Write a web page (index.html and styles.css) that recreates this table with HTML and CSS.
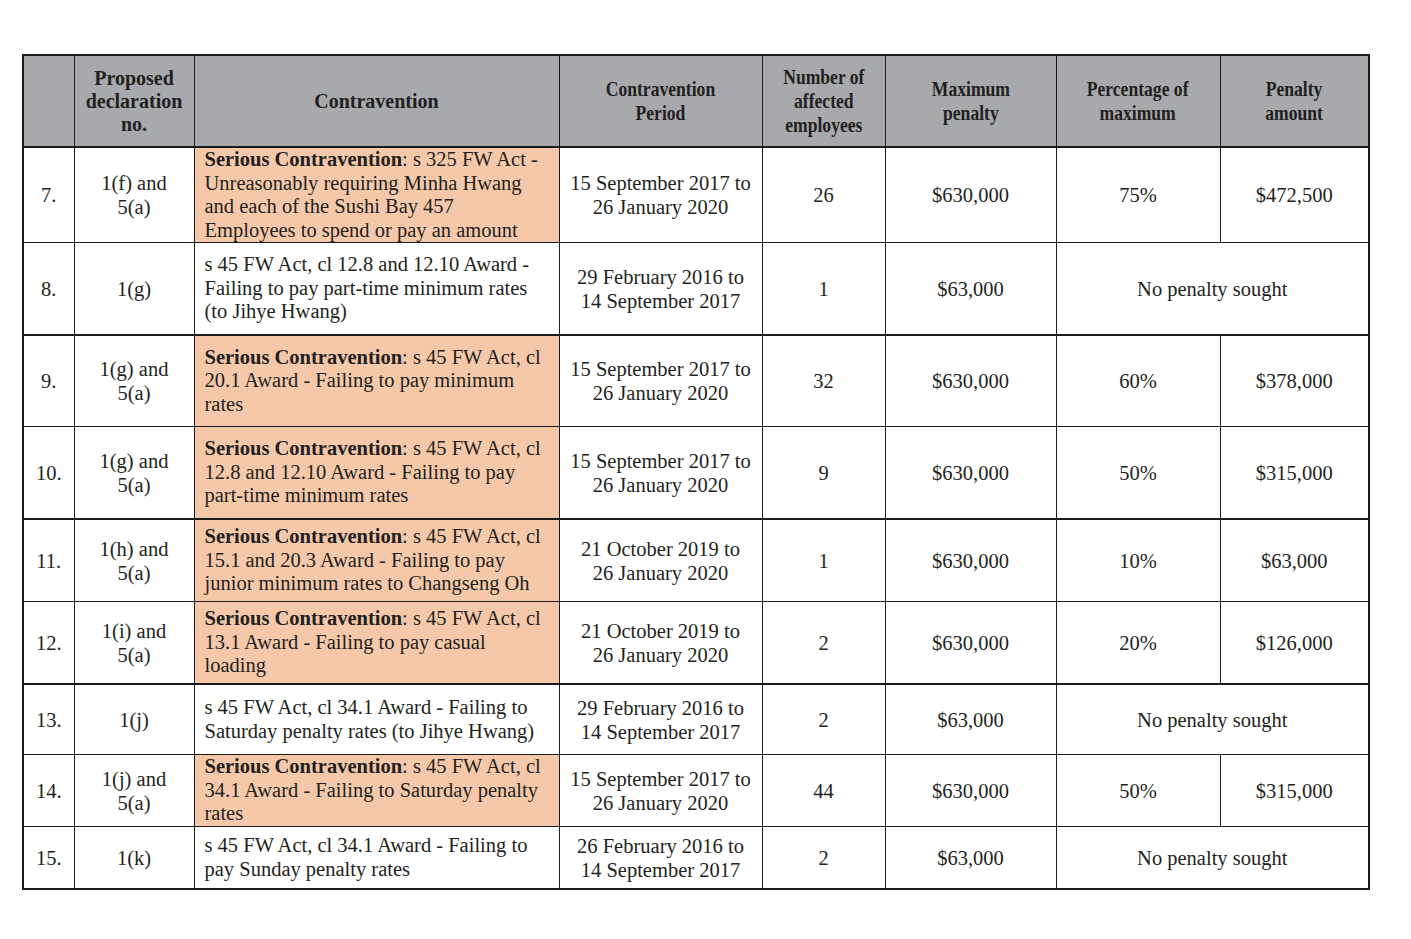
FILE: index.html
```html
<!DOCTYPE html>
<html>
<head>
<meta charset="utf-8">
<link rel="stylesheet" href="styles.css">
</head>
<body>
<table class="tbl">
  <colgroup>
    <col class="c1"><col class="c2"><col class="c3"><col class="c4"><col class="c5"><col class="c6"><col class="c7"><col class="c8">
  </colgroup>
  <thead>
    <tr class="hdr">
      <th></th>
      <th>Proposed<br>declaration<br>no.</th>
      <th>Contravention</th>
      <th><span class="cond">Contravention<br>Period</span></th>
      <th><span class="cond">Number of<br>affected<br>employees</span></th>
      <th><span class="cond">Maximum<br>penalty</span></th>
      <th><span class="cond">Percentage of<br>maximum</span></th>
      <th><span class="cond">Penalty<br>amount</span></th>
    </tr>
  </thead>
  <tbody>
    <tr class="r7">
      <td>7.</td><td>1(f) and<br>5(a)</td>
      <td class="desc hl"><b>Serious Contravention</b>: s 325 FW Act - Unreasonably requiring Minha Hwang and each of the Sushi Bay 457 Employees to spend or pay an amount</td>
      <td>15 September 2017 to<br>26 January 2020</td><td>26</td><td>$630,000</td><td>75%</td><td>$472,500</td>
    </tr>
    <tr class="r8">
      <td>8.</td><td>1(g)</td>
      <td class="desc">s 45 FW Act, cl 12.8 and 12.10 Award - Failing to pay part-time minimum rates (to Jihye Hwang)</td>
      <td>29 February 2016 to<br>14 September 2017</td><td>1</td><td>$63,000</td><td colspan="2">No penalty sought</td>
    </tr>
    <tr class="r9 thick">
      <td>9.</td><td>1(g) and<br>5(a)</td>
      <td class="desc hl"><b>Serious Contravention</b>: s 45 FW Act, cl 20.1 Award - Failing to pay minimum rates</td>
      <td>15 September 2017 to<br>26 January 2020</td><td>32</td><td>$630,000</td><td>60%</td><td>$378,000</td>
    </tr>
    <tr class="r10">
      <td>10.</td><td>1(g) and<br>5(a)</td>
      <td class="desc hl"><b>Serious Contravention</b>: s 45 FW Act, cl 12.8 and 12.10 Award - Failing to pay part-time minimum rates</td>
      <td>15 September 2017 to<br>26 January 2020</td><td>9</td><td>$630,000</td><td>50%</td><td>$315,000</td>
    </tr>
    <tr class="r11 thick">
      <td>11.</td><td>1(h) and<br>5(a)</td>
      <td class="desc hl"><b>Serious Contravention</b>: s 45 FW Act, cl 15.1 and 20.3 Award - Failing to pay junior minimum rates to Changseng Oh</td>
      <td>21 October 2019 to<br>26 January 2020</td><td>1</td><td>$630,000</td><td>10%</td><td>$63,000</td>
    </tr>
    <tr class="r12">
      <td>12.</td><td>1(i) and<br>5(a)</td>
      <td class="desc hl"><b>Serious Contravention</b>: s 45 FW Act, cl 13.1 Award - Failing to pay casual loading</td>
      <td>21 October 2019 to<br>26 January 2020</td><td>2</td><td>$630,000</td><td>20%</td><td>$126,000</td>
    </tr>
    <tr class="r13 thick">
      <td>13.</td><td>1(j)</td>
      <td class="desc">s 45 FW Act, cl 34.1 Award - Failing to Saturday penalty rates (to Jihye Hwang)</td>
      <td>29 February 2016 to<br>14 September 2017</td><td>2</td><td>$63,000</td><td colspan="2">No penalty sought</td>
    </tr>
    <tr class="r14">
      <td>14.</td><td>1(j) and<br>5(a)</td>
      <td class="desc hl"><b>Serious Contravention</b>: s 45 FW Act, cl 34.1 Award - Failing to Saturday penalty rates</td>
      <td>15 September 2017 to<br>26 January 2020</td><td>44</td><td>$630,000</td><td>50%</td><td>$315,000</td>
    </tr>
    <tr class="r15">
      <td>15.</td><td>1(k)</td>
      <td class="desc">s 45 FW Act, cl 34.1 Award - Failing to pay Sunday penalty rates</td>
      <td>26 February 2016 to<br>14 September 2017</td><td>2</td><td>$63,000</td><td colspan="2">No penalty sought</td>
    </tr>
  </tbody>
</table>
</body>
</html>
```

FILE: styles.css
```css
html, body {
  margin: 0;
  padding: 0;
  background: #ffffff;
}
body {
  padding: 54px 0 0 22px;
  font-family: "Liberation Serif", "Times New Roman", serif;
  color: #231f20;
}
.tbl {
  border-collapse: collapse;
  table-layout: fixed;
  width: 1346px;
  font-size: 20.5px;
  line-height: 24px;
  border: 2px solid #1a1a1a;
}
.c1 { width: 51px; }
.c2 { width: 120px; }
.c3 { width: 365px; }
.c4 { width: 203px; }
.c5 { width: 123px; }
.c6 { width: 171px; }
.c7 { width: 164px; }
.c8 { width: 149px; }
.tbl th, .tbl td {
  border: 1px solid #1a1a1a;
  text-align: center;
  vertical-align: middle;
  padding: 0 4px;
}
.hdr th {
  background: #a7a9ac;
  height: 90px;
  font-weight: bold;
  font-size: 20px;
  line-height: 23px;
  color: #231f20;
  border-bottom: 2px solid #1a1a1a;
}
.hdr .cond {
  display: inline-block;
  font-size: 22px;
  line-height: 24px;
  transform: scaleX(0.8);
  white-space: nowrap;
}
.tbl td.desc {
  text-align: left;
  padding: 0 14px 0 10px;
  line-height: 23.5px;
}
.tbl td.hl {
  background: #f5c8a9;
}
.tbl b {
  font-weight: bold;
}
.thick td {
  border-top: 2px solid #1a1a1a;
}
.r7 td { height: 93px; }
.r8 td { height: 91px; }
.r9 td { height: 90px; }
.r10 td { height: 91px; }
.r11 td { height: 81px; }
.r12 td { height: 81px; }
.r13 td { height: 69px; }
.r14 td { height: 71px; }
.r15 td { height: 61px; }
```
